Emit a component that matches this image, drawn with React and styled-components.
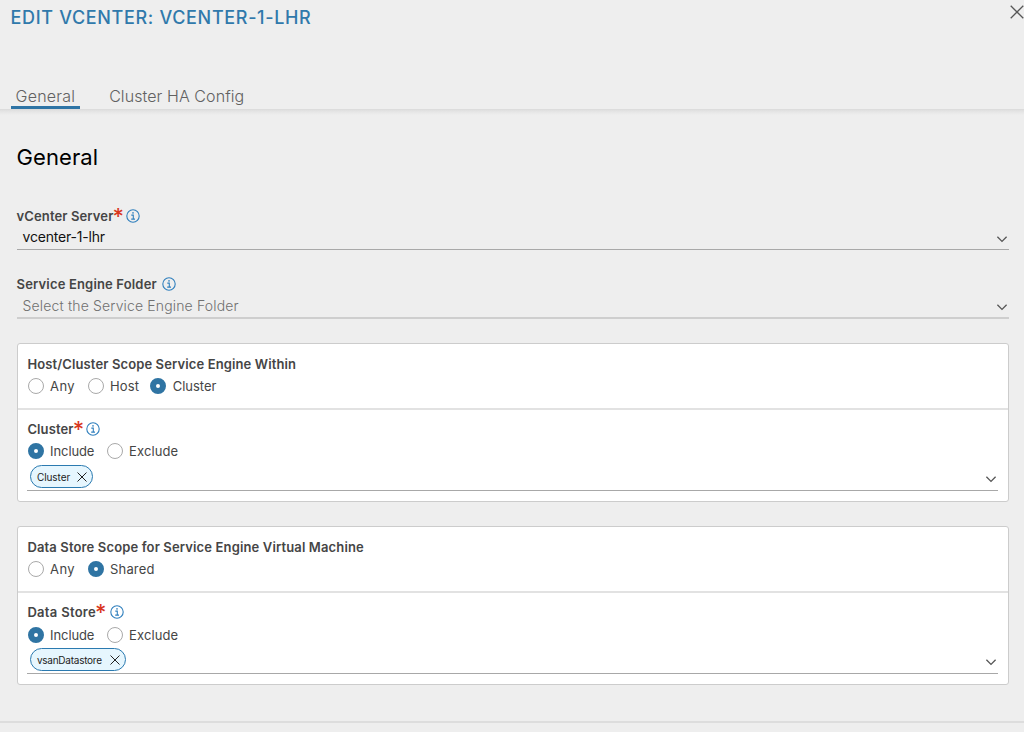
import React from "react";
import styled, { createGlobalStyle } from "styled-components";

const GlobalStyle = createGlobalStyle`
  *, *::before, *::after { box-sizing: border-box; }
  body {
    margin: 0;
    background: #eeeeee;
    color: #454545;
    font-family: Inter, "Liberation Sans", sans-serif;
    font-size: 13px;
    overflow: hidden;
  }
`;

const Modal = styled.div`
  display: flex;
  flex-direction: column;
  height: 732px;
  overflow: hidden;
`;

const Header = styled.header`
  display: flex;
  justify-content: space-between;
  align-items: flex-start;
  height: 83px;
  padding-left: 10.6px;
`;

const Title = styled.h1`
  margin: 0;
  font-size: 18px;
  font-weight: 550;
  line-height: 35px;
  letter-spacing: 0.66px;
  color: #3079ab;
`;

const CloseButton = styled.button`
  display: flex;
  margin: 5px 0 0;
  padding: 0;
  border: 0;
  background: none;
  color: #565656;
`;

const Tabs = styled.nav`
  display: flex;
  gap: 24px;
  height: 26px;
  padding-left: 10.6px;
  flex: none;
`;

const Tab = styled.a`
  height: 26px;
  padding: 0 5px;
  font-size: 16px;
  font-weight: 350;
  line-height: 26px;
  letter-spacing: ${(p) => p.$spacing || "0"};
  color: #616161;
  box-shadow: ${(p) => (p.$active ? "inset 0 -3px 0 #2e74a5" : "none")};
`;

const Body = styled.main`
  flex: none;
  height: 612px;
  padding: 0 15px 0 16.6px;
  background: linear-gradient(#dadada, #e3e3e3 2px, #eeeeee 6px) no-repeat 0 0 / 100% 6px;
`;

const Heading = styled.h2`
  margin: 0;
  padding-top: 33px;
  height: 95px;
  font-size: 22px;
  font-weight: 400;
  line-height: 30px;
  letter-spacing: 0.08px;
  color: #000000;
`;

const Field = styled.div`
  height: ${(p) => p.$height};
`;

const Label = styled.div`
  display: flex;
  align-items: center;
  height: 23px;
  padding-bottom: ${(p) => p.$lift || "0"};
  font-weight: 600;
  letter-spacing: ${(p) => p.$spacing || "0.12px"};
  color: #454545;
`;

const Required = styled.span`
  width: 11px;
  height: 23px;
  margin-left: -1px;
  font-size: 22px;
  font-weight: 450;
  line-height: 25px;
  letter-spacing: 0;
  color: #d9371f;
`;

const InfoSvg = styled.svg`
  margin-left: ${(p) => p.$gap};
  flex: none;
`;

const Select = styled.div`
  display: flex;
  align-items: center;
  justify-content: space-between;
  height: ${(p) => p.$height || "23px"};
  padding: ${(p) => p.$pad || "0 1px 0 6px"};
  border-bottom: ${(p) => p.$line || "1px solid #a8a8a8"};
`;

const Value = styled.span`
  padding-bottom: ${(p) => (p.$placeholder ? "2px" : "4px")};
  font-size: 14px;
  font-weight: ${(p) => (p.$placeholder ? "350" : "400")};
  letter-spacing: ${(p) => (p.$placeholder ? "0.15px" : "-0.2px")};
  color: ${(p) => (p.$placeholder ? "#707070" : "#111111")};
`;

const Card = styled.section`
  height: 159px;
  margin-bottom: 24px;
  background: #ffffff;
  border: 1px solid #cccccc;
  border-radius: 3px;
`;

const ScopeBlock = styled.div`
  height: 66px;
  padding: 8px 10px 0 9.8px;
  border-bottom: 2px solid #e2e2e2;
`;

const PickBlock = styled.div`
  padding: 8px 10px 0 9.8px;
`;

const Radios = styled.div`
  display: flex;
  align-items: center;
  height: 22px;
  padding-left: 0.3px;
  padding-bottom: ${(p) => p.$lift || "0"};
`;

const RadioLabel = styled.label`
  display: flex;
  align-items: center;
  width: ${(p) => p.$width};
  gap: 6.4px;
  line-height: 16px;
  letter-spacing: ${(p) => p.$spacing || "0"};
  color: #454545;
`;

const Dot = styled.span`
  flex: none;
  width: 16px;
  height: 16px;
  border-radius: 50%;
  border: ${(p) => (p.$on ? "6px solid #2f74a3" : "1px solid #a9a9a9")};
  background: #ffffff;
`;

const Chip = styled.span`
  display: flex;
  align-items: center;
  justify-content: space-between;
  width: ${(p) => p.$width};
  height: 23px;
  padding: 0 5px 0 6.3px;
  border: 1px solid #2b7ab0;
  border-radius: 12px;
  background: #e6f6fe;
  font-size: 10px;
  letter-spacing: ${(p) => p.$spacing};
  color: #222222;
`;

const ChevronSvg = styled.svg`
  flex: none;
  margin-top: ${(p) => p.$drop};
`;

const Footer = styled.footer`
  flex: 1;
  border-top: 2px solid #dddddd;
`;

function Info({ gap = "4px" }) {
  return (
    <InfoSvg $gap={gap} width="14" height="14" viewBox="0 0 14 14" fill="none" stroke="#2f7fbd">
      <circle cx="7" cy="7" r="6.2" strokeWidth="1.1" />
      <path d="M5.3 6.1H7.3V10M5.2 10.1H9" strokeWidth="1.1" />
      <circle cx="7" cy="3.9" r="0.8" fill="#2f7fbd" stroke="none" />
    </InfoSvg>
  );
}

function Chevron({ drop = "0" }) {
  return (
    <ChevronSvg $drop={drop} width="12" height="8" viewBox="0 0 12 8" fill="none" stroke="#565656" strokeWidth="1.3">
      <path d="M1.4 1.8L6 6.4L10.6 1.8" />
    </ChevronSvg>
  );
}

function Cross({ size = 10, color = "#222222", width = 1 }) {
  return (
    <svg width={size} height={size} viewBox="0 0 10 10" fill="none" stroke={color} strokeWidth={width}>
      <path d="M0.5 0.5L9.5 9.5M9.5 0.5L0.5 9.5" />
    </svg>
  );
}

function Radio({ on, width, spacing, children }) {
  return (
    <RadioLabel $width={width} $spacing={spacing}>
      <Dot $on={on} />
      {children}
    </RadioLabel>
  );
}

function Picker({ label, chip, chipWidth, chipSpacing, labelSpacing, lift, infoGap }) {
  return (
    <PickBlock>
      <Label $spacing={labelSpacing} $lift="2px">
        {label}
        <Required>*</Required>
        <Info gap={infoGap} />
      </Label>
      <Radios $lift={lift}>
        <Radio on width="79px" spacing="-0.1px">Include</Radio>
        <Radio spacing="0.1px">Exclude</Radio>
      </Radios>
      <Select $height="28px" $pad="0 1px 0 2.2px">
        <Chip $width={chipWidth} $spacing={chipSpacing}>
          {chip}
          <Cross />
        </Chip>
        <Chevron drop="5px" />
      </Select>
    </PickBlock>
  );
}

export default function App() {
  return (
    <Modal>
      <GlobalStyle />
      <Header>
        <Title>EDIT VCENTER: VCENTER-1-LHR</Title>
        <CloseButton aria-label="Close">
          <Cross size={14} color="#565656" width={0.9} />
        </CloseButton>
      </Header>
      <Tabs>
        <Tab $active $spacing="0.2px">General</Tab>
        <Tab $spacing="0.08px">Cluster HA Config</Tab>
      </Tabs>
      <Body>
        <Heading>General</Heading>
        <Field $height="68px">
          <Label>
            vCenter Server
            <Required>*</Required>
            <Info gap="2.5px" />
          </Label>
          <Select>
            <Value>vcenter-1-lhr</Value>
            <Chevron drop="1px" />
          </Select>
        </Field>
        <Field $height="71px">
          <Label $spacing="0.16px">
            Service Engine Folder
            <Info gap="5px" />
          </Label>
          <Select $height="24px" $line="2px solid #cecece">
            <Value $placeholder>Select the Service Engine Folder</Value>
            <Chevron drop="2px" />
          </Select>
        </Field>
        <Card>
          <ScopeBlock>
            <Label>Host/Cluster Scope Service Engine Within</Label>
            <Radios>
              <Radio width="60px" spacing="0.4px">Any</Radio>
              <Radio width="62.6px" spacing="0.1px">Host</Radio>
              <Radio on>Cluster</Radio>
            </Radios>
          </ScopeBlock>
          <Picker label="Cluster" lift="2px" infoGap="2.5px" chip="Cluster" chipWidth="63px" chipSpacing="-0.05px" />
        </Card>
        <Card>
          <ScopeBlock>
            <Label $spacing="0.14px">Data Store Scope for Service Engine Virtual Machine</Label>
            <Radios>
              <Radio width="60px" spacing="0.4px">Any</Radio>
              <Radio on spacing="0.15px">Shared</Radio>
            </Radios>
          </ScopeBlock>
          <Picker label="Data Store" labelSpacing="0.3px" infoGap="3.8px" chip="vsanDatastore" chipWidth="96px" chipSpacing="-0.24px" />
        </Card>
      </Body>
      <Footer />
    </Modal>
  );
}
